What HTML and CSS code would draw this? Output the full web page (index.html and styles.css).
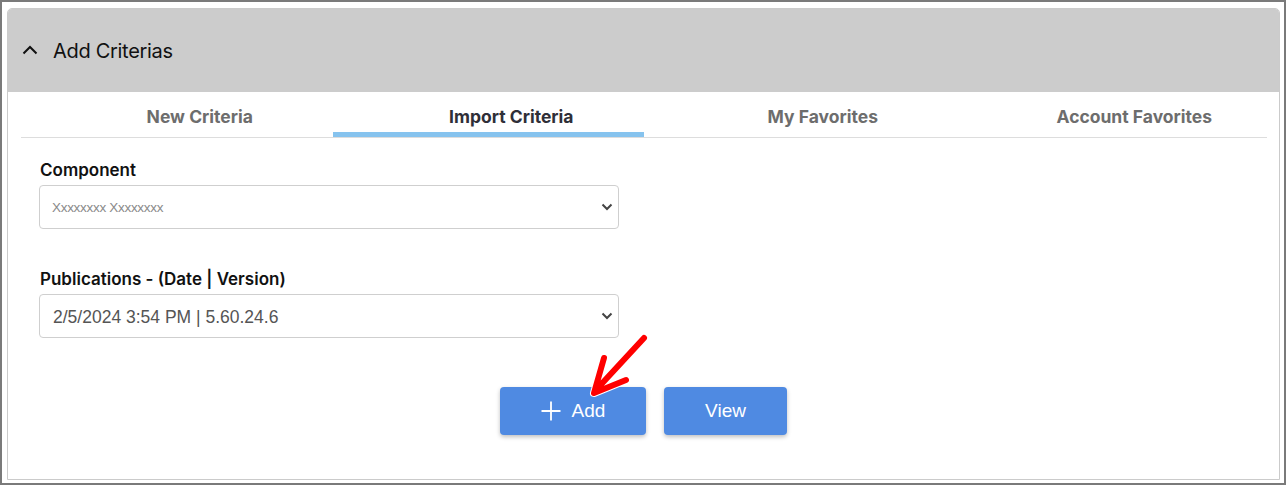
FILE: index.html
```html
<!DOCTYPE html>
<html lang="en">
<head>
  <meta charset="UTF-8">
  <meta name="viewport" content="width=device-width, initial-scale=1.0">
  <title>Add Criterias</title>
  <link rel="stylesheet" href="styles.css">
</head>
<body>
  <div class="frame">
    <div class="card">
      <div class="card-header">
        <svg class="chevron-up" width="16" height="10" viewBox="0 0 16 10">
          <path d="M1.5 8.5 L8 2 L14.5 8.5" fill="none" stroke="#111" stroke-width="2"/>
        </svg>
        <span class="card-title">Add Criterias</span>
      </div>

      <div class="tabs">
        <div class="tab">New Criteria</div>
        <div class="tab active">Import Criteria</div>
        <div class="tab">My Favorites</div>
        <div class="tab">Account Favorites</div>
      </div>

      <div class="form">
        <div class="field">
          <label class="field-label">Component</label>
          <div class="select">
            <span class="placeholder">Xxxxxxxx Xxxxxxxx</span>
            <svg width="12" height="8" viewBox="0 0 12 8">
              <path d="M1.5 1.5 L6 6 L10.5 1.5" fill="none" stroke="#444" stroke-width="2"/>
            </svg>
          </div>
        </div>

        <div class="field">
          <label class="field-label">Publications - (Date | Version)</label>
          <div class="select">
            <span class="value">2/5/2024 3:54 PM | 5.60.24.6</span>
            <svg width="12" height="8" viewBox="0 0 12 8">
              <path d="M1.5 1.5 L6 6 L10.5 1.5" fill="none" stroke="#444" stroke-width="2"/>
            </svg>
          </div>
        </div>

        <div class="actions">
          <button class="btn btn-add">
            <svg width="20" height="20" viewBox="0 0 20 20">
              <path d="M10 0.5 V19.5 M0.5 10 H19.5" stroke="#fff" stroke-width="1.8"/>
            </svg>
            Add
          </button>
          <button class="btn btn-view">View</button>
        </div>
      </div>
    </div>

    <!-- annotation arrow drawn on top of the screenshot -->
    <svg class="arrow" width="75" height="70" viewBox="0 0 75 70">
      <g fill="none" stroke-linecap="round" stroke-linejoin="round">
        <path d="M64 8 L15 61 M24 28 L14 63 L46 50" stroke="#fff" stroke-width="8"/>
        <path d="M64 8 L15 61 M24 28 L14 63 L46 50" stroke="#f00" stroke-width="6"/>
      </g>
    </svg>
  </div>
</body>
</html>
```

FILE: styles.css
```css
body {
  margin: 0;
  padding: 0;
  font-family: Inter, "Liberation Sans", sans-serif;
  background: #fff;
}

.frame {
  position: relative;
  width: 1286px;
  height: 485px;
  box-sizing: border-box;
  border: 2px solid #7a7a7a;
  padding: 6px 4px 3px 5px;
}

.card {
  height: 100%;
  box-sizing: border-box;
  border: 1px solid #cbcbcb;
  border-radius: 5px 5px 0 0;
  background: #fff;
}

.card-header {
  height: 83px;
  background: #cccccc;
  border-radius: 4px 4px 0 0;
  display: flex;
  align-items: center;
  padding-left: 14px;
}

.chevron-up {
  margin-right: 15px;
  margin-top: -2px;
}

.card-title {
  font-size: 20px;
  color: #111;
  letter-spacing: -0.3px;
}

.tabs {
  display: flex;
  margin: 0 12px 0 13px;
  border-bottom: 1px solid #dddddd;
}

.tab {
  flex: 1;
  height: 45px;
  box-sizing: border-box;
  padding: 14px 0 0 46px;
  text-align: center;
  font-size: 17.5px;
  font-weight: 700;
  line-height: 22px;
  color: #6d6d6d;
}

.tab.active {
  color: #2f2f38;
  border-bottom: 5px solid #86c3ee;
}

.form {
  padding: 22px 0 0 31px;
}

.field {
  width: 580px;
  margin-bottom: 40px;
}

.field-label {
  display: block;
  font-size: 17px;
  font-weight: 600;
  line-height: 21px;
  color: #111;
  margin: 0 0 4px 1px;
}

.select {
  height: 44px;
  box-sizing: border-box;
  border: 1px solid #cfcfcf;
  border-radius: 4px;
  display: flex;
  align-items: center;
  justify-content: space-between;
  padding: 0 5px 0 12px;
  font-family: "Liberation Sans", Arial, sans-serif;
}

.placeholder {
  font-size: 13.5px;
  color: #8a8a8a;
  letter-spacing: -0.3px;
}

.value {
  font-size: 17.5px;
  color: #555;
  margin-left: 1px;
  padding-top: 2px;
}

.actions {
  display: flex;
  justify-content: center;
  gap: 18px;
  margin: 49px 0 0 -31px;
}

.btn {
  height: 48px;
  border: none;
  border-radius: 4px;
  background: #4f8ae2;
  color: #fff;
  font-family: "Liberation Sans", Arial, sans-serif;
  font-size: 19px;
  box-shadow: 0 2px 4px rgba(0, 0, 0, 0.25);
  display: flex;
  align-items: center;
  justify-content: center;
  gap: 11px;
  padding: 0;
}

.btn-add {
  width: 146px;
}

.btn-view {
  width: 123px;
}

.arrow {
  position: absolute;
  left: 578px;
  top: 328px;
}
```
